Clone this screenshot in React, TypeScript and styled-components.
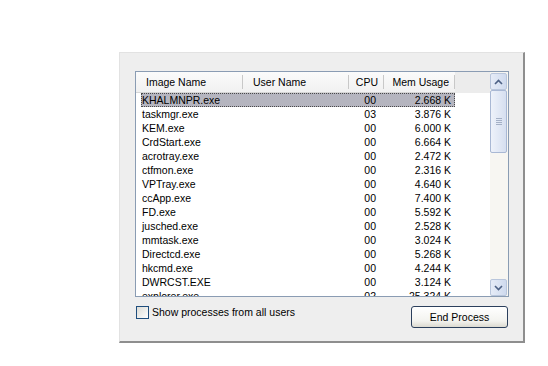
import React from "react";
import styled, { createGlobalStyle } from "styled-components";

const GlobalStyle = createGlobalStyle`
  html, body {
    margin: 0;
    padding: 0;
    background: #ffffff;
  }
  body {
    font-family: "Liberation Sans", Arial, sans-serif;
    font-size: 10.5px;
    color: #000;
  }
`;

interface Proc {
  name: string;
  cpu: string;
  mem: string;
}

const processes: Proc[] = [
  { name: "KHALMNPR.exe", cpu: "00", mem: "2.668 K" },
  { name: "taskmgr.exe", cpu: "03", mem: "3.876 K" },
  { name: "KEM.exe", cpu: "00", mem: "6.000 K" },
  { name: "CrdStart.exe", cpu: "00", mem: "6.664 K" },
  { name: "acrotray.exe", cpu: "00", mem: "2.472 K" },
  { name: "ctfmon.exe", cpu: "00", mem: "2.316 K" },
  { name: "VPTray.exe", cpu: "00", mem: "4.640 K" },
  { name: "ccApp.exe", cpu: "00", mem: "7.400 K" },
  { name: "FD.exe", cpu: "00", mem: "5.592 K" },
  { name: "jusched.exe", cpu: "00", mem: "2.528 K" },
  { name: "mmtask.exe", cpu: "00", mem: "3.024 K" },
  { name: "Directcd.exe", cpu: "00", mem: "5.268 K" },
  { name: "hkcmd.exe", cpu: "00", mem: "4.244 K" },
  { name: "DWRCST.EXE", cpu: "00", mem: "3.124 K" },
  { name: "explorer.exe", cpu: "02", mem: "25.324 K" },
];

const App: React.FC = () => {
  return (
    <Page>
      <GlobalStyle />
      <Panel>
        <ListBox>
          <ListArea>
            <Header>
              <HeadCell>Image Name</HeadCell>
              <HeadCell>User Name</HeadCell>
              <HeadCell $right>CPU</HeadCell>
              <HeadCell $right>Mem Usage</HeadCell>
              <HeadFiller />
            </Header>
            <Rows>
              {processes.map((p, i) => (
                <Row key={p.name} $selected={i === 0}>
                  <Cell>{p.name}</Cell>
                  <Cell />
                  <Cell $right $pad={8}>{p.cpu}</Cell>
                  <Cell $right $pad={4}>{p.mem}</Cell>
                </Row>
              ))}
            </Rows>
          </ListArea>
          <ScrollBar>
            <ScrollButton>
              <svg width="9" height="6" viewBox="0 0 9 6">
                <path d="M1 5 L4.5 1.5 L8 5" fill="none" stroke="#4d6185" strokeWidth="1.6" />
              </svg>
            </ScrollButton>
            <Thumb>
              <Grip />
              <Grip />
              <Grip />
              <Grip />
            </Thumb>
            <Track />
            <ScrollButton>
              <svg width="9" height="6" viewBox="0 0 9 6">
                <path d="M1 1 L4.5 4.5 L8 1" fill="none" stroke="#4d6185" strokeWidth="1.6" />
              </svg>
            </ScrollButton>
          </ScrollBar>
        </ListBox>
        <Footer>
          <CheckLabel>
            <CheckBox />
            <span>Show processes from all users</span>
          </CheckLabel>
          <Button>End Process</Button>
        </Footer>
      </Panel>
    </Page>
  );
};

const Page = styled.div`
  padding: 52px 0 0 119px;
  width: 548px;
  height: 366px;
  box-sizing: border-box;
  overflow: hidden;
`;

const Panel = styled.div`
  width: 406px;
  height: 291px;
  box-sizing: border-box;
  background: #eeeeee;
  border-top: 1px solid #e2e2e2;
  border-left: 1px solid #e2e2e2;
  border-right: 2px solid #8e8e8e;
  border-bottom: 2px solid #8e8e8e;
  padding: 18px 0 0 15px;
  display: flex;
  flex-direction: column;
`;

const ListBox = styled.div`
  width: 374px;
  height: 226px;
  box-sizing: border-box;
  border: 1px solid #8a9cb3;
  background: #fff;
  display: flex;
  overflow: hidden;
`;

const ListArea = styled.div`
  flex: 1;
  display: flex;
  flex-direction: column;
  min-width: 0;
`;

const Header = styled.div`
  display: grid;
  grid-template-columns: 107px 106px 35px 71px 1fr;
  height: 21px;
  flex: none;
  background: linear-gradient(#fbfbfb, #f1f1f1);
  border-bottom: 1px solid #d6d6d6;
  box-sizing: border-box;
`;

const HeadCell = styled.div<{ $right?: boolean }>`
  display: flex;
  align-items: center;
  justify-content: ${(p) => (p.$right ? "flex-end" : "flex-start")};
  padding: ${(p) => (p.$right ? "0 5px 0 0" : "0 0 0 10px")};
  border-right: 1px solid #c8c8c8;
  margin: 3px 0;
  white-space: nowrap;
  line-height: 14px;
`;

const HeadFiller = styled.div`
  background: #ececec;
  margin-bottom: -1px;
`;

const Rows = styled.div`
  flex: 1;
  overflow: hidden;
  padding: 0 0 0 5px;
`;

const Row = styled.div<{ $selected?: boolean }>`
  display: grid;
  grid-template-columns: 102px 106px 35px 71px;
  width: 314px;
  height: 14px;
  box-sizing: border-box;
  background: ${(p) => (p.$selected ? "#b5b5bf" : "transparent")};
  outline: ${(p) => (p.$selected ? "1px dotted #4a4a4a" : "none")};
  outline-offset: -1px;
`;

const Cell = styled.div<{ $right?: boolean; $pad?: number }>`
  line-height: 14px;
  white-space: nowrap;
  text-align: ${(p) => (p.$right ? "right" : "left")};
  padding: ${(p) => (p.$right ? `0 ${p.$pad ?? 4}px 0 0` : "0 0 0 1px")};
`;

const ScrollBar = styled.div`
  width: 18px;
  flex: none;
  display: flex;
  flex-direction: column;
  background: #f7f6f2;
  padding-top: 1px;
  box-sizing: border-box;
`;

const ScrollButton = styled.div`
  height: 17px;
  width: 17px;
  box-sizing: border-box;
  border: 1px solid #b9c6dc;
  border-radius: 2px;
  background: linear-gradient(90deg, #e6ecf7, #cfdaee);
  display: flex;
  align-items: center;
  justify-content: center;
  flex: none;
`;

const Thumb = styled.div`
  height: 63px;
  width: 17px;
  box-sizing: border-box;
  border: 1px solid #a9b8d4;
  border-radius: 2px;
  background: linear-gradient(90deg, #eef2fa, #d6dff0);
  display: flex;
  flex-direction: column;
  align-items: center;
  justify-content: center;
  gap: 1px;
  flex: none;
`;

const Grip = styled.div`
  width: 6px;
  height: 1px;
  background: #a4b0c6;
`;

const Track = styled.div`
  flex: 1;
`;

const Footer = styled.div`
  display: flex;
  justify-content: space-between;
  align-items: flex-start;
  width: 373px;
  margin-top: 9px;
`;

const CheckLabel = styled.label`
  display: flex;
  align-items: center;
  gap: 3px;
  padding-left: 1px;
  line-height: 13px;
  white-space: nowrap;
`;

const CheckBox = styled.span`
  width: 13px;
  height: 13px;
  box-sizing: border-box;
  border: 1px solid #1f4e7d;
  background: linear-gradient(135deg, #dcdcd6, #ffffff);
`;

const Button = styled.button`
  width: 97px;
  height: 22px;
  box-sizing: border-box;
  border: 1px solid #2b3f5c;
  border-radius: 3px;
  background: linear-gradient(#ffffff, #f3f3ef 70%, #dcdad0);
  font-family: "Liberation Sans", Arial, sans-serif;
  font-size: 10.5px;
  color: #000;
  padding: 0;
`;

export default App;
